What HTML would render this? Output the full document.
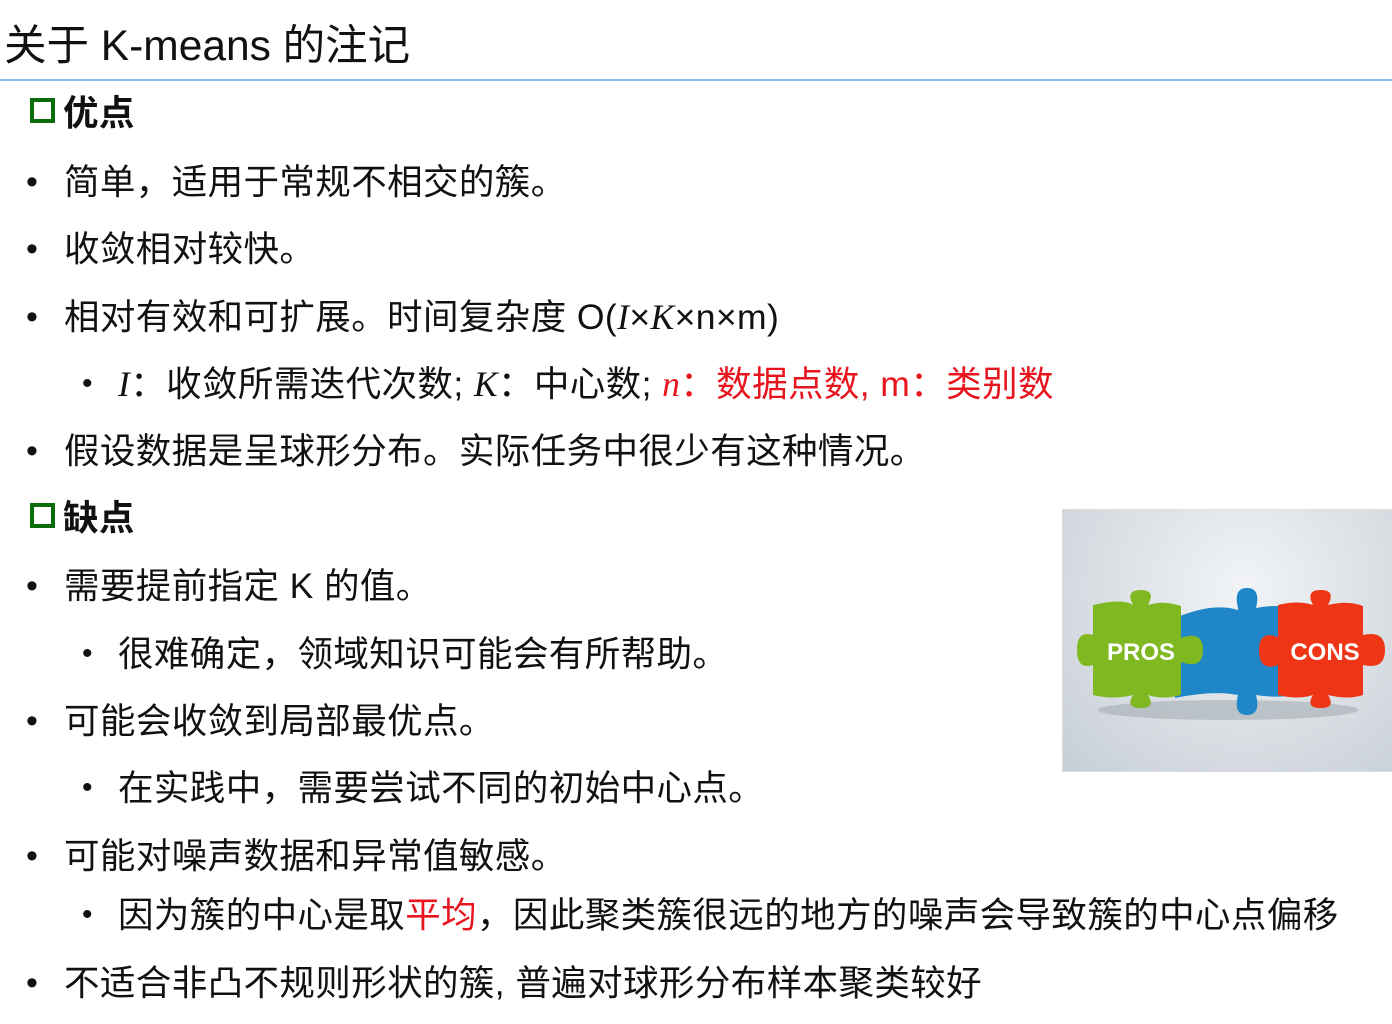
<!DOCTYPE html>
<html><head><meta charset="utf-8"><style>
body{margin:0;width:1392px;height:1024px;background:#fff;position:relative;overflow:hidden;font-family:"Liberation Sans","Noto Sans CJK SC",sans-serif;color:#111}
.t{position:absolute;left:4px;top:12px;font-size:42.5px;white-space:nowrap}
.hr{position:absolute;left:0;top:79px;width:1392px;height:2px;background:#8ab8ec}
.l{position:absolute;white-space:nowrap;font-size:35.5px;line-height:40px;letter-spacing:0.4px}
.h{font-weight:bold;left:30px}
.h i{display:inline-block;width:17px;height:17px;border:4px solid #0a6b0a;vertical-align:2px;margin-right:8px}
.b{left:64px}.b:before{content:"•";position:absolute;left:-38px;font-size:34px}
.s{left:118px}.s:before{content:"•";position:absolute;left:-36px;font-size:30px}
.r{color:#e8141e}
.m{font-family:"Liberation Serif",serif;font-style:italic}
.img{position:absolute;left:1062px;top:509px;width:329px;height:261px;border:1px solid #ddd;background:radial-gradient(ellipse at 55% 30%,#f2f4f6,#c6ced5)}
</style></head><body>
<div class="t">关于 K-means 的注记</div>
<div class="hr"></div>
<div class="l h" style="top:93px"><i></i>优点</div>
<div class="l b" style="top:162px">简单，适用于常规不相交的簇。</div>
<div class="l b" style="top:229px">收敛相对较快。</div>
<div class="l b" style="top:297px">相对有效和可扩展。时间复杂度 O(<span class="m">I</span>×<span class="m">K</span>×n×m)</div>
<div class="l s" style="top:364px"><span class="m">I</span>：收敛所需迭代次数; <span class="m">K</span>：中心数; <span class="m r">n</span><span class="r">：数据点数, m：类别数</span></div>
<div class="l b" style="top:431px">假设数据是呈球形分布。实际任务中很少有这种情况。</div>
<div class="l h" style="top:498px"><i></i>缺点</div>
<div class="l b" style="top:566px">需要提前指定 K 的值。</div>
<div class="l s" style="top:634px">很难确定，领域知识可能会有所帮助。</div>
<div class="l b" style="top:701px">可能会收敛到局部最优点。</div>
<div class="l s" style="top:768px">在实践中，需要尝试不同的初始中心点。</div>
<div class="l b" style="top:836px">可能对噪声数据和异常值敏感。</div>
<div class="l s" style="top:895px">因为簇的中心是取<span class="r">平均</span>，因此聚类簇很远的地方的噪声会导致簇的中心点偏移</div>
<div class="l b" style="top:963px">不适合非凸不规则形状的簇, 普遍对球形分布样本聚类较好</div>
<div class="img">
<svg width="329" height="261" viewBox="0 0 329 261">
<ellipse cx="165" cy="200" rx="130" ry="10" fill="#9aa3aa" opacity=".5"/>
<path d="M112 108 Q150 92 175 100 L175 98 Q170 78 184 78 Q198 78 193 98 Q225 92 250 104 L250 180 Q225 190 193 185 Q198 205 184 205 Q170 205 175 185 Q150 180 112 188 Z" fill="#1f86c8"/>
<path d="M30 95 Q60 88 70 95 Q62 80 78 80 Q93 80 85 95 Q100 90 118 96 L118 128 Q140 120 140 140 Q140 160 118 152 L118 185 Q100 190 85 185 Q93 198 78 198 Q62 198 70 185 Q50 190 30 185 L30 155 Q14 160 14 140 Q14 120 30 125 Z" fill="#7fb821"/>
<path d="M215 95 Q235 90 250 95 Q242 80 258 80 Q273 80 265 95 Q285 90 300 96 L300 125 Q322 120 322 140 Q322 160 300 155 L300 185 Q285 190 265 185 Q273 198 258 198 Q242 198 250 185 Q235 190 215 185 L215 155 Q196 162 196 140 Q196 120 215 127 Z" fill="#ee3616"/>
<text x="78" y="150" font-family="Liberation Sans" font-weight="bold" font-size="24" fill="#fff" text-anchor="middle">PROS</text>
<text x="262" y="150" font-family="Liberation Sans" font-weight="bold" font-size="24" fill="#fff" text-anchor="middle">CONS</text>
</svg></div>
</body></html>
